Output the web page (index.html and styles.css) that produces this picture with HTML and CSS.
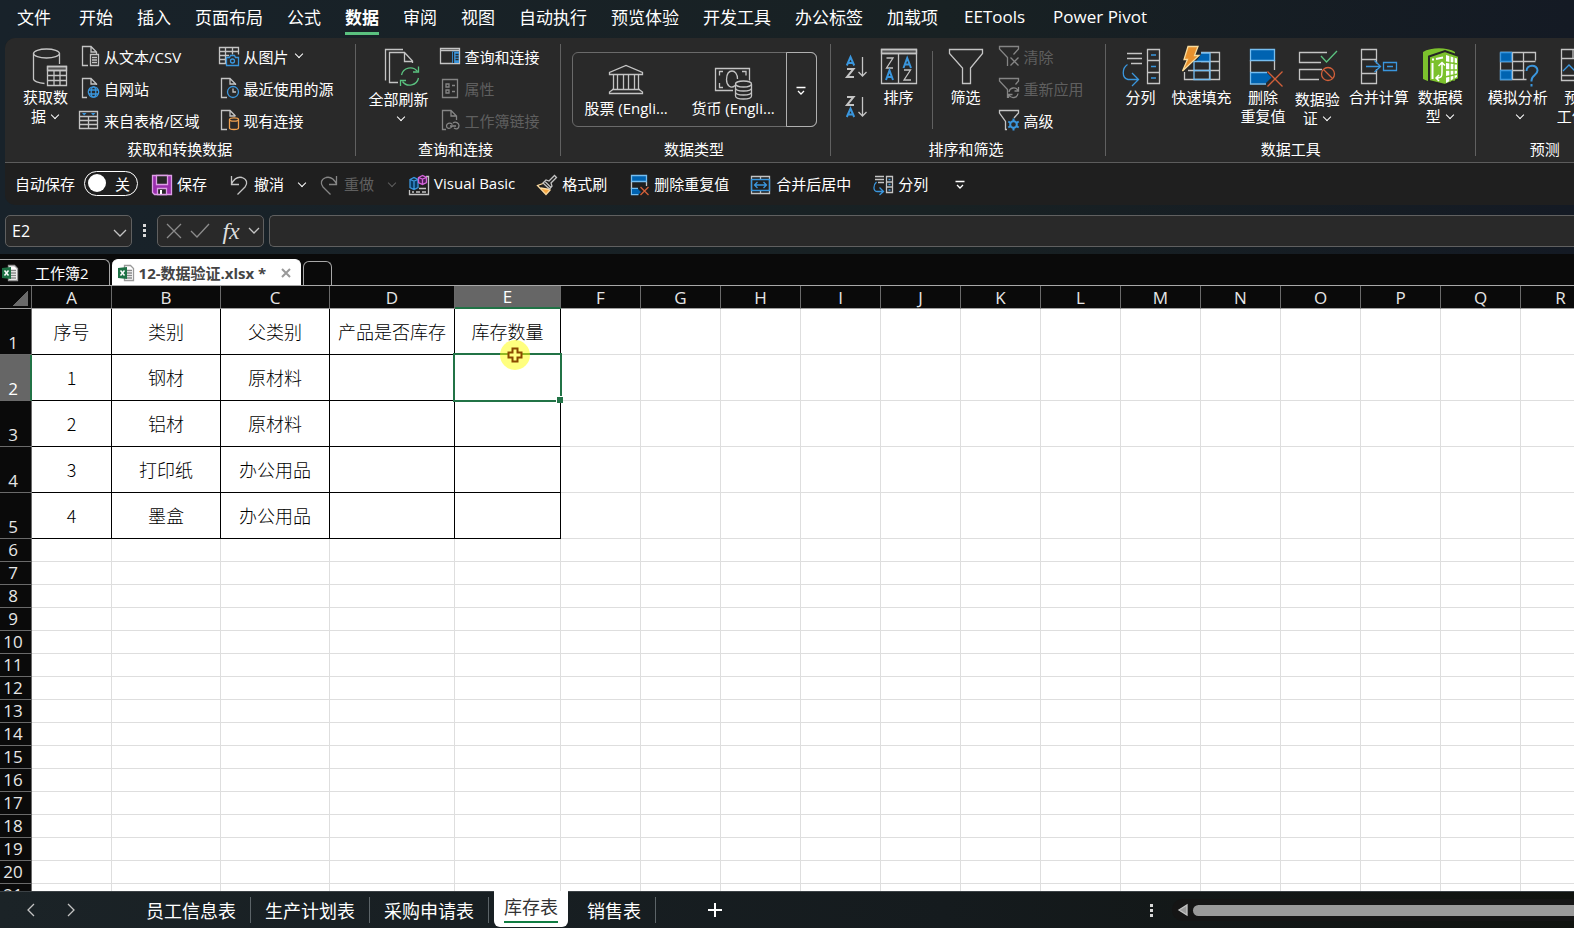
FILE: index.html
```
<!DOCTYPE html>
<html lang="zh-CN">
<head>
    <meta charset="UTF-8">
    <meta name="viewport" content="width=device-width, initial-scale=1.0">
    <title>12-数据验证.xlsx</title>
    <link rel="stylesheet" href="styles.css">
</head>
<body>
    <nav class="menu">
        <button class="file">文件</button>
        <button>开始</button>
        <button>插入</button>
        <button>页面布局</button>
        <button>公式</button>
        <button class="active">数据</button>
        <button>审阅</button>
        <button>视图</button>
        <button>自动执行</button>
        <button>预览体验</button>
        <button>开发工具</button>
        <button>办公标签</button>
        <button>加载项</button>
        <button class="latin">EETools</button>
        <button class="latin">Power Pivot</button>
    </nav>

    <div class="ribbon">
        <div class="groups">
            <!-- 获取和转换数据 -->
            <section class="group get-data">
                <div class="tools">
                    <button class="big">
                        <svg viewBox="0 0 40 40"><ellipse cx="20.5" cy="7.5" rx="13" ry="4.5"/><path d="M7.500 7.500V33c0 2 5 4 11 4.500M33.500 7.500V18"/><path fill="#555" d="M21.500 20.500h19v4h-19z"/><path d="M21.500 20.500h19v19h-19zM21.500 24.500h19M21.500 29.500h19M21.500 34.500h19M28 24.500v15M34 24.500v15"/></svg>
                        <span>获取数<br>据<i class="chev"></i></span>
                    </button>
                    <div class="stack">
                        <button class="small"><svg viewBox="0 0 20 20"><path d="M9 19.500H3.500V.500H12L17.500 6v2M12 .500V6h5.500"/><path d="M11.500 8.500h8v11h-8zM13 11.500h5M13 14h5M13 16.500h5"/></svg>从文本/CSV</button>
                        <button class="small"><svg viewBox="0 0 20 20"><path d="M8 19.500H3.500V.500H12L17.500 6v1M12 .500V6h5.500"/><g class="blue"><circle cx="14.500" cy="14" r="5.200"/><ellipse cx="14.500" cy="14" rx="2.300" ry="5.200"/><path d="M10 12h9M10 16h9"/></g></svg>自网站</button>
                        <button class="small"><svg viewBox="0 0 20 20"><path d="M.500 1.500h18v17H.500zM.500 6.500h18M.500 10.500h18M.500 14.500h18M9.500 6.500v12"/><path class="solid-blue" d="M3 3h4.500L5.200 5.500zM12 3h4.500l-2.300 2.500z"/></svg>来自表格/区域</button>
                    </div>
                    <div class="stack">
                        <button class="small"><svg viewBox="0 0 20 20"><path d="M7 17.500H.500v-16h19v7M.500 5.500h19M.500 9.500H10M.500 13.500H7M6.500 1.500v16M13.500 1.500v7"/><path class="blue" d="M7.500 11.500h3l1-2h4l1 2h3v8h-12z"/><circle class="blue" cx="13.500" cy="15" r="2"/></svg>从图片<i class="chev"></i></button>
                        <button class="small"><svg viewBox="0 0 20 20"><path d="M8 19.500H2.500V.500H11L16.500 6v1M11 .500V6h5.500"/><circle class="blue" cx="14" cy="14" r="5.500"/><path d="M14 10.500V14h3"/></svg>最近使用的源</button>
                        <button class="small"><svg viewBox="0 0 20 20"><path d="M8 19.500H2.500V.500H11L16.500 6M11 .500V6h5.500"/><path class="orange" d="M10.500 9.500v8.500c0 2 9 2 9 0V9.500"/><ellipse class="orange" cx="15" cy="9.500" rx="4.500" ry="1.700"/></svg>现有连接</button>
                    </div>
                </div>
                <h2>获取和转换数据</h2>
            </section>
            <span class="sep"></span>

            <!-- 查询和连接 -->
            <section class="group queries">
                <div class="tools">
                    <button class="big split">
                        <svg viewBox="0 0 40 40"><path d="M24 3.500H6.500V34.500"/><path d="M19 36.500h-8.500v-30h15l8 8.500v2M25.500 6.500V15.500h8"/><g class="green"><path d="M22.500 29a9 9 0 0 1 16-3.500M39.500 32a9 9 0 0 1-16 3.500"/><path d="M39.500 20.500v5.500h-5.500M21.500 40v-5.500h5.500"/></g></svg>
                        <span>全部刷新<br><i class="chev"></i></span>
                    </button>
                    <div class="stack">
                        <button class="small"><svg viewBox="0 0 20 20"><path d="M.500 2.500h19v15H.500zM.500 4.500h19"/><path class="solid-blue" d="M12 5.500h7V17h-7z"/><path class="dark" d="M13.500 6v11M15.500 8.500h3M15.500 11h3M15.500 13.500h3"/></svg>查询和连接</button>
                        <button class="small" disabled><svg viewBox="0 0 20 20"><path d="M2.500 1.500h15v18h-15zM6 6h3v3H6zM6 12h3v3H6zM12 7.500h3M12 13.500h3"/></svg>属性</button>
                        <button class="small" disabled><svg viewBox="0 0 20 20"><path d="M6 19.500H2.500V.500H11L16.500 6v4M11 .500V6h5.500"/><path d="M12 16.500c-2 3-5.500 2-5.500-.500s3-4 6-1.500M13 13c2.500-2 6 0 6 2.500s-2 4.500-5 2.500M10 16h6"/></svg>工作簿链接</button>
                    </div>
                </div>
                <h2>查询和连接</h2>
            </section>
            <span class="sep"></span>

            <!-- 数据类型 -->
            <section class="group types">
                <div class="tools">
                    <div class="gallery">
                        <button class="type"><svg viewBox="0 0 36 32"><path d="M1.500 10.500V8.500L18 1.500l16.500 7v2zM5.500 10.500v15M9.500 10.500v15M15.500 10.500v15M20.500 10.500v15M26.500 10.500v15M30.500 10.500v15M4 25.500h28M1.500 29.500h33v-1.500L31 25.500H5L1.500 28z"/></svg>股票 (Engli...</button>
                        <button class="type"><svg viewBox="0 0 36 32"><path d="M18 26.500H.500v-22h34v12"/><path d="M8 7.500H4.500v4M4.500 19v4.500H8M27 7.500h4v4"/><path d="M20 21.500c-4 4-8.500 0-8.500-6s2.500-8.500 5.500-8.500 5.500 3 5.500 8"/><ellipse cx="28.500" cy="20" rx="8" ry="3"/><path d="M20.500 20v12c0 4 16 4 16 0V20M20.500 24c0 4 16 4 16 0M20.500 28c0 4 16 4 16 0"/></svg>货币 (Engli...</button>
                        <button class="more" aria-label="更多数据类型"><svg viewBox="0 0 10 10"><path d="M.500 1.500h9M2 5l3 3 3-3"/></svg></button>
                    </div>
                </div>
                <h2>数据类型</h2>
            </section>
            <span class="sep"></span>

            <!-- 排序和筛选 -->
            <section class="group sorting">
                <div class="tools">
                    <div class="az">
                        <button aria-label="升序"><svg viewBox="0 0 20 22"><path class="blue bold" d="M.800 9.500L4.500 1l3.700 8.500M2.200 7h4.600"/><path class="bold" d="M1 13h6.500L1 21h7"/><path d="M16.500 1v19M12.500 16l4 4 4-4"/></svg></button>
                        <button aria-label="降序"><svg viewBox="0 0 20 22"><path class="bold" d="M1 1h6.500L1 9h7"/><path class="blue bold" d="M.800 21L4.500 12.500 8.200 21M2.200 18.500h4.600"/><path d="M16.500 1v19M12.500 16l4 4 4-4"/></svg></button>
                    </div>
                    <button class="big">
                        <svg viewBox="0 0 40 40"><path fill="#555" d="M2.500 3.500h35v4h-35z"/><path d="M2.500 3.500h35v34h-35zM2.500 7.500h35M19.500 7.500v30"/><path d="M7.500 12h6.500l-6.500 10H14M25 24h6.500L25 34h7"/><path class="blue bold" d="M7 34l3.500-9.500L14 34M8.300 31h4.500M24.500 22l3.700-10L32 22M26 18.500h4.500"/></svg>
                        <span>排序</span>
                    </button>
                    <span class="sep"></span>
                    <button class="big">
                        <svg viewBox="0 0 40 40"><path d="M3.500 3.500h33v4L24.500 22v15.500h-8V22L3.500 7.500z"/></svg>
                        <span>筛选</span>
                    </button>
                    <div class="stack">
                        <button class="small" disabled><svg viewBox="0 0 20 20"><path d="M8.500 20v-8.500L.500 3V.500h19V3l-5 5.500"/><path d="M11.500 11.500l8 8M19.500 11.500l-8 8"/></svg>清除</button>
                        <button class="small" disabled><svg viewBox="0 0 20 20"><path d="M8.500 20v-8.500L.500 3V.500h19V3l-3 3.500"/><path d="M10 14a4.800 4.800 0 0 1 9-1.500M19 15.500a4.800 4.800 0 0 1-9 1.500M19.500 9v4h-4M9.500 20v-3.500h4"/></svg>重新应用</button>
                        <button class="small"><svg viewBox="0 0 20 20"><path d="M8 19.500H6.500v-8L.500 3V.500h19V3L15 8"/><g class="blue bold"><circle cx="14.500" cy="14.500" r="3.300"/><path d="M14.500 8.500v2.500M14.500 18v2.500M9.300 11.500l2.200 1.300M17.500 16.200l2.200 1.300M9.300 17.500l2.200-1.300M17.500 12.800l2.200-1.300"/></g></svg>高级</button>
                    </div>
                </div>
                <h2>排序和筛选</h2>
            </section>
            <span class="sep"></span>

            <!-- 数据工具 -->
            <section class="group data-tools">
                <div class="tools">
                    <button class="big">
                        <svg viewBox="0 0 40 40"><path d="M6 7.500h15M6 12.500h15M10 17.500h11M26.500 3.500h12v34h-12zM26.500 14.500h12M26.500 26.500h12"/><path class="blue" d="M30 9h5M30 20.500h5M30 32h5M6.500 18.500C1 22 .500 32 7 33.500h10M11 27l6.500 6.500L11 40"/></svg>
                        <span>分列</span>
                    </button>
                    <button class="big">
                        <svg viewBox="0 0 40 40"><path d="M19 6.500h18.500v27H2.500V26M27.500 6.500v27M19 15.500h18.500M6 24.500h31.500"/><path fill="#0063b1" stroke="none" d="M20 7h8v8.500H14z"/><path stroke="#75bdf0" d="M12 15.500h16v18H12zM12 24.500h16M28 6.500v9M19 7h9"/><path fill="#e8912d" stroke="#f9dc9c" d="M6 .500h10l-3.500 9H17L.500 25l5-11.500H2z"/></svg>
                        <span>快速填充</span>
                    </button>
                    <button class="big">
                        <svg viewBox="0 0 40 40"><path d="M7.500 14v12"/><path d="M31.500 14v10"/><path fill="#0063b1" stroke="#75bdf0" d="M7.500 3.500h24v11h-24z"/><path fill="#0063b1" stroke="none" d="M7.500 26.500h16l5 5-6 6h-15z"/><path stroke="#75bdf0" d="M24 26.500H7.500v11.500H23"/><path class="red" d="M24.500 25.500l15 15M39.500 25.500l-15 15"/></svg>
                        <span>删除<br>重复值</span>
                    </button>
                    <button class="big split">
                        <svg viewBox="0 0 40 40"><path d="M30 6.500H2.500v10H24M25 23.500H2.500v10H22"/><path class="green" d="M24 10l5.500 6L40 5"/><circle class="red" cx="31" cy="28" r="6.500"/><path class="red" d="M26.500 23.500l9 9"/></svg>
                        <span>数据验<br>证<i class="chev"></i></span>
                    </button>
                    <button class="big">
                        <svg viewBox="0 0 40 40"><path d="M17.500 13.500v-10h-15v34h15v-10h-15M2.500 13.500h15M17.500 13.500v4M17.500 23v5"/><path class="blue" d="M7 20.500h14M15.500 14.500l6 6-6 5.500M24.500 16.500h13v8h-13zM28 20.500h6"/></svg>
                        <span>合并计算</span>
                    </button>
                    <button class="big">
                        <svg viewBox="0 0 40 40"><path fill="#7cc12d" stroke="none" d="M3 6C11 1 27 1 35 6v5H10v25L3 33z"/><path fill="#7cc12d" stroke="#262626" stroke-width="2" d="M9 10.500L25 5l14 5v23L25 39 9 35z"/><path fill="#fff" stroke="none" d="M26 9l11 3.500V31l-11 6z"/><path stroke="#7cc12d" d="M30 9v27M34 10v25M25 16l13 2M25 24h13M25 31l13-3"/><path stroke="#fff" stroke-width="2" d="M12.500 17v16M12 13.500h2M16 13l7-1.500"/><path stroke="#fff" stroke-width="1.500" d="M16 32c6 0 6-2 6-6v-9M18.500 20l3.500-3.500 3 3M19 29l-3 3 3 3"/></svg>
                        <span>数据模<br>型<i class="chev"></i></span>
                    </button>
                </div>
                <h2>数据工具</h2>
            </section>
            <span class="sep"></span>

            <!-- 预测 -->
            <section class="group forecast">
                <div class="tools">
                    <button class="big">
                        <svg viewBox="0 0 40 40"><path d="M2.500 6.500h35v8M2.500 6.500v27h26M2.500 15.500h35M2.500 24.500h24M14.500 6.500v27M25.500 6.500v27"/><path fill="#0063b1" stroke="#3a96dd" d="M2.500 6.500h11v9h-11zM2.500 24.500h11v9h-11z"/><path class="blue bold" d="M28.500 25c0-7 11-7 11-.500 0 4.500-6 4.500-6 10v1M33.500 38v2.500"/></svg>
                        <span>模拟分析<br><i class="chev"></i></span>
                    </button>
                    <button class="big">
                        <svg viewBox="0 0 40 40"><path d="M12 34.500H2.500v-31h34v31H12M2.500 12.500h34M14 3.500v9M26 3.500v9M2.500 29.500h34"/><path class="blue" d="M4 25l6-6 5 5 4-4"/></svg>
                        <span>预测<br>工作表</span>
                    </button>
                </div>
                <h2>预测</h2>
            </section>
        </div>

        <div class="quick">
            <label class="autosave">自动保存
                <span class="switch"><input type="checkbox">关</span>
            </label>
            <button><svg viewBox="0 0 20 20"><path fill="#9b2fae" stroke="#dd9fe6" d="M.500 .500h19v19h-17l-2-2z"/><path fill="#262626" stroke="#dd9fe6" d="M4.500 .500h11v9h-11zM5.500 13.500h9v6h-9z"/><path fill="#fff" stroke="none" d="M8 15h2v4H8z"/></svg>保存</button>
            <button><svg viewBox="0 0 20 20"><path d="M2.500 1v8.500H10M2.500 9C5 4 9 1.500 13 2.500c5 1.500 6 6 3 9.500L8.500 19.500"/></svg>撤消</button>
            <button class="drop" aria-label="撤消列表"><i class="chev"></i></button>
            <button disabled><svg viewBox="0 0 20 20"><path d="M17.500 1v8.500H10M17.500 9C15 4 11 1.500 7 2.500 2 4 1 8.500 4 12l7.500 7.500"/></svg>重做</button>
            <button class="drop" aria-label="重做列表" disabled><i class="chev"></i></button>
            <button class="latin"><svg viewBox="0 0 20 20"><path d="M.500 15v4.500h19V1.500H17M3 17h2M7 17h4M13 17h4M10 13.500h7"/><path fill="#0a3a60" class="blue" d="M1 4.500l4-2 4 2v8l-4 2-4-2zM1 4.500l4 1.500 4-1.500M5 6v8"/><path fill="#4a1d50" stroke="#d264d8" d="M9.500 2.500l4-2 4 2v5l-4 2-4-2zM9.500 2.500l4 1.500 4-1.500M13.500 4v5"/></svg>Visual Basic</button>
            <button><svg viewBox="0 0 20 20"><path fill="#f6a742" stroke="none" d="M4 13.500l9 1-4 4.500z"/><path stroke="#ffdca0" d="M6 8.500L.500 10.500l8.500 9 4.500-5M3.500 13l9 1.500"/><path d="M6 8l3-3 3 1L17.500.500l2 2L14 8l1 3-2.500 3zM8 6.500l5.500 5.500"/></svg>格式刷</button>
            <button><svg viewBox="0 0 20 20"><path d="M2.500 7v7M17.500 7v4"/><path fill="#0063b1" stroke="#75bdf0" d="M2.500 .500h15v6h-15zM9 13.500H2.500v6h7"/><path fill="#0063b1" stroke="none" d="M3 14h6l3 3-2 2H3z"/><path class="red" d="M11.500 12l8 8M19.500 12l-8 8"/></svg>删除重复值</button>
            <button><svg viewBox="0 0 20 20"><path d="M.500 1.500h18v17H.500zM9.500 1.500v3M9.500 15.500v3"/><path class="blue" d="M.500 4.500h18v11H.500zM3.500 10h12M6.500 7l-3 3 3 3M12.500 7l3 3-3 3"/></svg>合并后居中</button>
            <button><svg viewBox="0 0 20 20"><path d="M2 1.500h9M2 4.500h9M5 7.500h6M13.500 1.500h6v16h-6zM13.500 7h6M13.500 12h6"/><path class="blue" d="M15.500 4.500h2M15.500 9.500h2M15.500 15h2M3.500 7C0 10 0 16 4 16.500h6M6.500 12.500l4 4-4 3.500"/></svg>分列</button>
            <button aria-label="自定义快速访问工具栏"><svg class="tiny" viewBox="0 0 10 10"><path d="M.500 1.500h9M2 5l3 3 3-3"/></svg></button>
        </div>
    </div>

    <div class="formula-bar">
        <div class="name-box">
            <input type="text" value="E2" aria-label="名称框">
            <button aria-label="名称列表"><svg viewBox="0 0 12 8"><path d="M0 1l6 6 6-6"/></svg></button>
        </div>
        <span class="dots"><i></i><i></i><i></i></span>
        <div class="fx-box">
            <button aria-label="取消"><svg viewBox="0 0 16 16"><path d="M1 1l14 14M15 1L1 15"/></svg></button>
            <button aria-label="输入"><svg viewBox="0 0 20 16"><path d="M1 8l6 6L19 1"/></svg></button>
            <button class="fx" aria-label="插入函数">fx</button>
            <button aria-label="函数列表"><svg viewBox="0 0 12 8"><path d="M1 1l5 5 5-5"/></svg></button>
        </div>
        <input class="formula" type="text" aria-label="编辑栏">
    </div>

    <div class="doc-tabs">
        <button class="doc"><svg viewBox="0 0 16 16"><path fill="#fff" stroke="#999" d="M6.500 .500h6l3 3v12h-9z"/><path stroke="#888" d="M9 5.500h5M9 8h5M9 10.500h5M9 13h5"/><path fill="#1e7145" stroke="none" d="M0 3l9-1v12l-9-1z"/><path stroke="#fff" stroke-width="1.500" d="M2.500 5.500l4 5M6.500 5.500l-4 5"/></svg><span>工作簿2</span></button>
        <button class="doc active"><svg viewBox="0 0 16 16"><path fill="#fff" stroke="#999" d="M6.500 .500h6l3 3v12h-9z"/><path stroke="#888" d="M9 5.500h5M9 8h5M9 10.500h5M9 13h5"/><path fill="#1e7145" stroke="none" d="M0 3l9-1v12l-9-1z"/><path stroke="#fff" stroke-width="1.500" d="M2.500 5.500l4 5M6.500 5.500l-4 5"/></svg><span>12-数据验证.xlsx *</span><svg class="close" viewBox="0 0 10 10"><path d="M1 1l8 8M9 1L1 9"/></svg></button>
        <button class="doc new" aria-label="新建"></button>
    </div>

    <main class="sheet">
        <table id="grid"></table>
    </main>

    <footer class="sheet-bar">
        <button class="arrow" aria-label="上一个"><svg viewBox="0 0 8 14"><path d="M7 1L1 7l6 6"/></svg></button>
        <button class="arrow" aria-label="下一个"><svg viewBox="0 0 8 14"><path d="M1 1l6 6-6 6"/></svg></button>
        <div class="sheet-tabs">
            <button>员工信息表</button>
            <button>生产计划表</button>
            <button>采购申请表</button>
            <button class="active"><span>库存表</span></button>
            <button>销售表</button>
        </div>
        <button class="add" aria-label="新工作表"><svg viewBox="0 0 14 14"><path d="M7 0v14M0 7h14"/></svg></button>
        <span class="dots"><i></i><i></i><i></i></span>
        <div class="scroll">
            <svg viewBox="0 0 10 12"><path d="M9 1v10L1 6z"/></svg>
            <span class="thumb"></span>
        </div>
    </footer>

    <script>
        const columns = 'ABCDEFGHIJKLMNOPQR'.split('');
        const widths = [80, 109, 109, 125, 106];
        const data = [
            ['序号', '类别', '父类别', '产品是否库存', '库存数量'],
            ['1', '钢材', '原材料', '', ''],
            ['2', '铝材', '原材料', '', ''],
            ['3', '打印纸', '办公用品', '', ''],
            ['4', '墨盒', '办公用品', '', '']
        ];

        let html = '<colgroup><col style="width:32px">';
        columns.forEach((c, i) => html += `<col style="width:${widths[i] || 80}px">`);
        html += '</colgroup><thead><tr><th class="corner"></th>';
        columns.forEach(c => html += `<th class="${c === 'E' ? 'selected' : ''}">${c}</th>`);
        html += '</tr></thead><tbody>';

        for (let row = 1; row <= 21; row++) {
            const values = data[row - 1];
            html += `<tr class="${values ? 'data' : ''}"><th class="${row === 2 ? 'selected' : ''}">${row}</th>`;
            columns.forEach((c, i) => {
                const text = values && values[i] ? values[i] : '';
                if (row === 2 && c === 'E') {
                    html += `<td class="filled current"><div class="selection"></div>
                        <div class="pointer"><svg viewBox="0 0 16 16"><path d="M5.500 1.500h5v4h4v5h-4v4h-5v-4h-4v-5h4z"/></svg></div></td>`;
                } else {
                    html += `<td class="${values && i < 5 ? 'filled' : ''}">${text}</td>`;
                }
            });
            html += '</tr>';
        }
        document.getElementById('grid').innerHTML = html + '</tbody>';
    </script>
</body>
</html>
```

FILE: styles.css
```
* {
    box-sizing: border-box;
}
body {
    margin: 0;
    height: 100vh;
    display: flex;
    flex-direction: column;
    overflow: hidden;
    background: linear-gradient(90deg, #18222a, #182123 60%, #141a24);
    color: #fff;
    font-family: "Open Sans", "Noto Sans CJK SC", sans-serif;
    font-size: 15px;
}
button, input {
    font: inherit;
    color: inherit;
    background: none;
    border: none;
    padding: 0;
    margin: 0;
}
button {
    white-space: nowrap;
    cursor: pointer;
}
button:disabled {
    color: #5f5f5f;
}
svg {
    flex: none;
    overflow: visible;
    fill: none;
    stroke: #c4c4c4;
    stroke-width: 1.3;
}
button:disabled svg {
    stroke: #858585;
}
.blue { stroke: #3a96dd; }
.green { stroke: #5ac17f; }
.orange { stroke: #f2a250; }
.red { stroke: #d2603a; }
.dark { stroke: #292929; }
.bold { stroke-width: 2; }
.solid-blue {
    fill: #3a96dd;
    stroke: none;
}
.chev {
    display: inline-block;
    width: 6px;
    height: 6px;
    border-right: 1px solid;
    border-bottom: 1px solid;
    transform: rotate(45deg);
    margin: 0 2px 4px 6px;
}

/* menu */
.menu {
    display: flex;
    flex: none;
    gap: 24px;
    height: 38px;
    padding-left: 17px;
}
.menu button {
    height: 35px;
    font-size: 17px;
    border-bottom: 3px solid transparent;
}
.menu .file {
    margin-right: 4px;
}
.menu .active {
    font-weight: bold;
    border-bottom-color: #5ac17f;
}
.menu .latin {
    padding: 1px 2px 0;
}

/* ribbon */
.ribbon {
    flex: none;
    margin-left: 5px;
    border-radius: 10px 0 0 10px;
    overflow: hidden;
    background: #1f1f1f;
}
.groups {
    display: flex;
    height: 125px;
    background: #292929;
    border-bottom: 1px solid #5c5c5c;
}
.group {
    flex: none;
    display: flex;
    flex-direction: column;
}
.group h2 {
    margin: 0;
    font-size: 15px;
    font-weight: normal;
    line-height: 24px;
    text-align: center;
}
.tools {
    display: flex;
    height: 99px;
}
.sep {
    flex: none;
    width: 1px;
    margin: 6px 0;
    background: #606060;
}
.big {
    display: flex;
    flex-direction: column;
    align-items: center;
    min-width: 52px;
    padding: 8px 4px 0;
    line-height: 19px;
}
.big svg {
    width: 40px;
    height: 40px;
    margin-bottom: 2px;
}
.split svg {
    margin-bottom: 4px;
}
.stack {
    padding-top: 2px;
}
.small {
    display: flex;
    align-items: center;
    gap: 5px;
    height: 32px;
    padding: 0 7px;
}
.small svg {
    width: 20px;
    height: 20px;
}
.small .chev {
    margin-left: 2px;
}
.get-data {
    padding: 0 14px;
}
.get-data .stack + .stack {
    margin-left: 5px;
}
.queries {
    padding: 0 13px 0 9px;
}
.types {
    padding: 0 13px 0 11px;
}
.gallery {
    display: flex;
    height: 75px;
    margin-top: 14px;
    border: 1px solid #6a6a6a;
    border-radius: 6px;
}
.type {
    display: flex;
    flex-direction: column;
    align-items: center;
    width: 107px;
    padding-top: 11px;
    line-height: 20px;
}
.type svg {
    width: 36px;
    height: 32px;
    margin-bottom: 2px;
}
.more {
    width: 31px;
    margin: -1px;
    border: 1px solid #b0b0b0;
    border-radius: 0 6px 6px 0;
}
.more svg, .tiny {
    width: 10px;
    height: 10px;
    stroke: #fff;
}
.sorting {
    padding: 0 14px 0 11px;
}
.sorting .tools .sep {
    margin: 13px 7px 8px;
}
.az {
    display: flex;
    flex-direction: column;
    gap: 18px;
    padding: 18px 3px 0 4px;
}
.az svg {
    display: block;
    width: 20px;
    height: 22px;
}
.az + .big {
    margin-left: 4px;
}
.data-tools {
    padding: 0 8px 0 9px;
}
.forecast {
    padding: 0 8px;
}
.data-tools .tools, .forecast .tools {
    gap: 1px;
}

/* quick access */
.quick {
    display: flex;
    align-items: center;
    height: 42px;
    padding-bottom: 2px;
}
.quick button {
    display: flex;
    align-items: center;
    gap: 5px;
    height: 30px;
    padding: 0 11px;
}
.quick button svg {
    width: 20px;
    height: 20px;
    margin-top: 4px;
}
.quick button .tiny {
    width: 10px;
    height: 10px;
    margin-left: 5px;
}
.quick .drop {
    width: 13px;
    padding: 0;
    justify-content: center;
}
.quick .drop .chev {
    margin: 0;
}
.autosave {
    display: flex;
    align-items: center;
    gap: 9px;
    padding: 0 3px 0 10px;
}
.switch {
    display: flex;
    align-items: center;
    justify-content: space-between;
    width: 54px;
    height: 25px;
    padding: 0 7px 0 3px;
    border: 1px solid #fff;
    border-radius: 13px;
}
.switch input {
    appearance: none;
    width: 18px;
    height: 18px;
    border-radius: 50%;
    background: #fff;
}

/* formula bar */
.formula-bar {
    flex: none;
    display: flex;
    align-items: center;
    height: 49px;
    padding: 2px 0 0 5px;
}
.name-box, .fx-box, .formula {
    height: 32px;
    background: #292929;
    border: 1px solid #606060;
    border-radius: 5px;
}
.name-box {
    display: flex;
    width: 127px;
    padding: 0 5px 0 6px;
    font-size: 16px;
}
.name-box input {
    flex: 1;
    min-width: 0;
}
.name-box svg {
    width: 12px;
    height: 8px;
}
.dots {
    display: flex;
    flex-direction: column;
    gap: 2px;
}
.dots i {
    width: 3px;
    height: 3px;
    background: #d8d8d8;
}
.formula-bar .dots {
    margin: 0 11px;
}
.fx-box {
    display: flex;
    align-items: center;
    justify-content: space-between;
    width: 107px;
    margin-right: 5px;
    padding: 0 3px 0 8px;
}
.fx-box svg {
    display: block;
    height: 16px;
    stroke: #8c8c8c;
}
.fx-box button:last-child svg {
    height: 8px;
    stroke: #c4c4c4;
}
.fx {
    padding-left: 4px;
    font-family: "Liberation Serif", serif;
    font-size: 24px;
    font-style: italic;
    line-height: 28px;
    color: #ddd;
}
.formula {
    flex: 1;
    padding: 0 8px;
    border-right: none;
    border-radius: 5px 0 0 5px;
}

/* workbook tabs */
.doc-tabs {
    flex: none;
    display: flex;
    align-items: flex-end;
    gap: 2px;
    height: 32px;
    background: #0a0a0a;
    border-bottom: 1px solid #a8a8a8;
}
.doc {
    display: flex;
    align-items: center;
    height: 26px;
    padding: 0 20px 0 2px;
    border: 1px solid #a8a8a8;
    border-bottom: none;
    border-left: none;
    border-radius: 0 6px 0 0;
}
.doc svg {
    width: 16px;
    height: 16px;
}
.doc span {
    margin-left: 17px;
}
.doc.active {
    padding: 0 9px 0 6px;
    background: #fff;
    border-color: #fff;
    border-radius: 6px 6px 0 0;
    color: #444;
    font-weight: bold;
}
.doc.active span {
    margin: 0 15px 0 5px;
}
.doc .close {
    width: 10px;
    height: 10px;
    stroke: #999;
    stroke-width: 2;
}
.doc.new {
    width: 29px;
    height: 24px;
    border-left: 1px solid #a8a8a8;
    border-radius: 6px 6px 0 0;
}

/* grid */
.sheet {
    flex: 1;
    min-height: 0;
    overflow: hidden;
    background: #fff;
}
#grid {
    width: 1601px;
    table-layout: fixed;
    border-spacing: 0;
}
#grid th, #grid td {
    height: 23px;
    padding: 0;
    line-height: 22px;
    border-right: 1px solid #dedede;
    border-bottom: 1px solid #dedede;
}
#grid th {
    background: #0a0a0a;
    border-color: #6a6a6a;
    font-size: 17px;
    font-weight: normal;
    color: #e6e6e6;
    vertical-align: bottom;
}
#grid thead th {
    line-height: 21px;
    border-bottom-color: #a0a0a0;
}
#grid tbody th {
    padding-right: 5px;
}
#grid .corner {
    background: linear-gradient(135deg, transparent 50%, #6a6a6a 50%) no-repeat 13px 5px / 15px 15px #0a0a0a;
}
#grid th.selected {
    background: #666;
    color: #fff;
}
#grid thead .selected {
    border-bottom: 2px solid #217346;
}
#grid tbody .selected {
    padding-right: 4px;
    border-right: 2px solid #217346;
}
#grid .data th, #grid .data td {
    height: 46px;
}
#grid td {
    color: #000;
    font-family: "Noto Sans CJK SC", sans-serif;
    font-size: 18px;
    font-weight: 300;
    text-align: center;
}
#grid .data td {
    padding-bottom: 2px;
}
#grid .filled {
    border-color: #000;
}
.current {
    position: relative;
}
.selection {
    position: absolute;
    inset: -2px;
    border: 2px solid #217346;
}
.selection::after {
    content: "";
    position: absolute;
    right: -3px;
    bottom: -3px;
    width: 6px;
    height: 6px;
    background: #217346;
    border: solid #fff;
    border-width: 1px 0 0 1px;
    box-sizing: content-box;
}
.pointer {
    position: absolute;
    left: 45px;
    top: -15px;
    width: 30px;
    height: 30px;
    padding: 7px;
    border-radius: 50%;
    background: rgba(255, 255, 0, 0.5);
}
.pointer svg {
    display: block;
    width: 16px;
    height: 16px;
    fill: #ffff80;
    stroke: #8a4a00;
    stroke-width: 2;
}

/* sheet bar */
.sheet-bar {
    flex: none;
    display: flex;
    align-items: center;
    height: 37px;
    border-top: 1px solid #3c4246;
    background: linear-gradient(90deg, #1b2327, #151b1e 60%, #10130f);
    font-size: 18px;
}
.arrow {
    width: 40px;
}
.arrow:first-child {
    margin-left: 11px;
}
.arrow svg {
    display: block;
    margin: auto;
    width: 8px;
    height: 14px;
}
.sheet-tabs {
    display: flex;
    align-items: center;
    align-self: stretch;
    margin-left: 41px;
}
.sheet-tabs button {
    height: 26px;
    padding: 2px 14px 0;
    line-height: 24px;
    border-right: 1px solid #5c6468;
}
.sheet-tabs .active {
    align-self: flex-start;
    height: 36px;
    margin: -1px 5px 0;
    padding: 0 10px;
    background: #fff;
    border: none;
    border-radius: 0 0 6px 6px;
    color: #333;
}
.sheet-tabs .active span {
    display: block;
    padding-bottom: 2px;
    line-height: 24px;
    border-bottom: 2px solid #107c41;
}
.add {
    margin-left: 52px;
}
.add svg {
    display: block;
    width: 14px;
    height: 14px;
    stroke: #fff;
    stroke-width: 2;
}
.sheet-bar .dots {
    margin: 0 19px 0 auto;
}
.scroll {
    display: flex;
    align-items: center;
    gap: 5px;
    width: 402px;
    height: 22px;
    padding-left: 6px;
    border-radius: 11px 0 0 11px;
    background: #151515;
}
.scroll svg {
    width: 10px;
    height: 12px;
    fill: #9a9a9a;
}
.thumb {
    flex: 1;
    height: 11px;
    border-radius: 6px 0 0 6px;
    background: #9a9a9a;
}
```
